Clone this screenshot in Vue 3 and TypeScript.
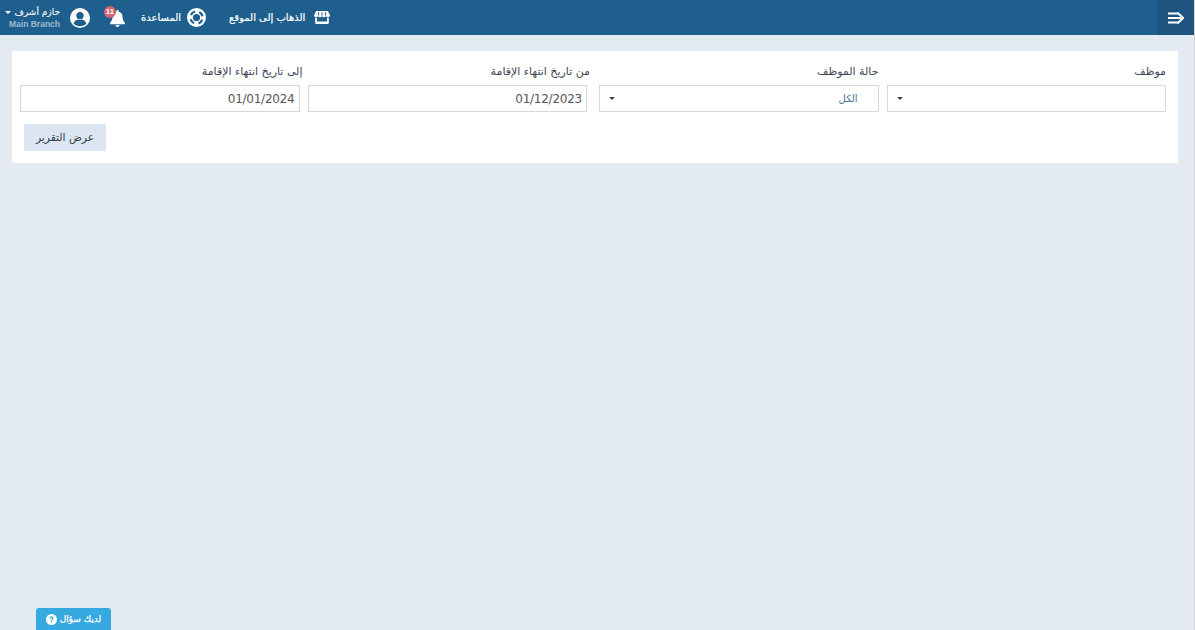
<script setup lang="ts">
const fieldsA = [
  { label: 'موظف', kind: 'select', value: '', labelClass: 'flush' },
  { label: 'حالة الموظف', kind: 'select', value: 'الكل', labelClass: 'flush' },
]
const fieldsB = [
  { label: 'من تاريخ انتهاء الإقامة', kind: 'date', value: '01/12/2023', labelClass: 'over' },
  { label: 'إلى تاريخ انتهاء الإقامة', kind: 'date', value: '01/01/2024', labelClass: 'over' },
]
const groups = [fieldsA, fieldsB]
</script>

<template>
  <div class="page">
    <header class="topbar">
      <div class="tools">
        <div class="user">
          <div class="user-row">
            <span class="caret white"></span>
            <span class="user-name">حازم أشرف</span>
          </div>
          <span class="branch">Main Branch</span>
        </div>
        <svg class="i-user" viewBox="0 0 20 20" width="20" height="20">
          <circle cx="10" cy="10" r="10" fill="#fff" />
          <circle cx="10" cy="7.600" r="3.700" fill="#1f5f8e" />
          <path d="M3.600 15.400c.9-2.500 3-3.800 4.400-3.800.7.300 1.300.4 2 .4s1.300-.1 2-.4c1.400 0 3.500 1.300 4.400 3.800C15 17.100 12.600 18.200 10 18.200s-5-1.100-6.400-2.800z" fill="#1f5f8e" />
        </svg>
        <div class="bell">
          <svg viewBox="0 0 15 17" width="15" height="17">
            <path d="M7.500 0c-.7 0-1.100.5-1.100 1.100v.7C4 2.300 2.500 4.200 2.500 6.600c0 3.700-1.300 4.900-2.100 5.800-.3.300-.4.500-.4.800 0 .6.400 1.100 1.100 1.100h12.800c.7 0 1.100-.5 1.100-1.100 0-.3-.1-.5-.4-.8-.8-.9-2.100-2.100-2.100-5.800 0-2.400-1.500-4.300-3.900-4.800v-.7C8.600.5 8.200 0 7.500 0zM5.500 15c0 1.100.9 2 2 2s2-.9 2-2z" fill="#fff" />
          </svg>
          <span class="badge">11</span>
        </div>
        <a class="tool help">
          <span class="tool-text">المساعدة</span>
          <svg viewBox="0 0 20 20" width="19" height="19">
            <circle cx="10" cy="10" r="10" fill="#fff" />
            <circle cx="10" cy="10" r="6.500" fill="none" stroke="#1f5f8e" stroke-width="2.400" stroke-dasharray="5.600 4.610" transform="rotate(20 10 10)" />
            <circle cx="10" cy="10" r="3.800" fill="#1f5f8e" />
          </svg>
        </a>
        <a class="tool site">
          <span class="tool-text">الذهاب إلى الموقع</span>
          <svg viewBox="0 0 16 13" width="16" height="13">
            <path d="M2.200 0h11.600L16 4.200c0 1.200-.9 2-2 2-.8 0-1.500-.4-2-1-.5.600-1.200 1-2 1s-1.500-.4-2-1c-.5.600-1.200 1-2 1s-1.500-.4-2-1c-.5.600-1.200 1-2 1-1.100 0-2-.8-2-2z" fill="#fff" />
            <path d="M1.200 6.800h1.800v3.800h10V6.800h1.800V12a1 1 0 0 1-1 1H2.200a1 1 0 0 1-1-1z" fill="#fff" />
            <path d="M4.600 1.200v3.300M8 1.200v3.300M11.400 1.200v3.300" stroke="#1f5f8e" stroke-width="1" />
          </svg>
        </a>
      </div>
      <button class="toggle" type="button" aria-label="menu">
        <svg viewBox="0 0 16 12" width="16" height="12">
          <path d="M0 1.500h10M0 6h13M0 10.500h10" stroke="#fff" stroke-width="2.200" fill="none" />
          <path d="M9.500 .6L15 6l-5.500 5.400" stroke="#fff" stroke-width="2" fill="none" />
        </svg>
      </button>
    </header>

    <main class="content">
      <section class="card" dir="rtl">
        <div class="rows">
          <div v-for="(group, g) in groups" :key="g" class="group">
            <div v-for="field in group" :key="field.label" class="field">
              <label class="label" :class="field.labelClass">{{ field.label }}</label>
              <div v-if="field.kind === 'select'" class="control select">
                <span class="select-value">{{ field.value }}</span>
                <span class="caret dark"></span>
              </div>
              <div v-else class="control date">{{ field.value }}</div>
            </div>
          </div>
        </div>
        <button class="report" type="button">عرض التقرير</button>
      </section>
    </main>

    <button class="ask" type="button">
      <svg viewBox="0 0 12 12" width="11" height="11">
        <circle cx="6" cy="6" r="6" fill="#fff" />
        <path d="M3.800 4.600c0-1.300 1-2.100 2.200-2.100s2.200.8 2.200 2c0 1.600-1.500 1.500-1.500 2.500H5.200c0-1.800 1.500-1.700 1.500-2.500 0-.4-.3-.7-.7-.7s-.8.300-.8.800zM5.200 7.900h1.500v1.500H5.200z" fill="#36a9e1" />
      </svg>
      <span>لديك سؤال</span>
    </button>
  </div>
</template>

<style>
html, body { margin: 0; background: #e4eaf2; }
</style>

<style scoped>
.page {
  height: 630px;
  width: 1194px;
  overflow: hidden;
  background: #e4eaf2;
  font-family: "DejaVu Sans", sans-serif;
  color: #3c4654;
  box-shadow: 1px 0 0 #d3d5d8;
}
.topbar {
  height: 35px;
  background: #1f5f8e;
  display: flex;
  justify-content: space-between;
}
.tools {
  display: flex;
  align-items: center;
  color: #fff;
}
.user {
  display: flex;
  flex-direction: column;
  align-items: flex-end;
  width: 60px;
  padding-top: 1px;
}
.user-row {
  display: flex;
  align-items: center;
  gap: 4px;
  height: 13px;
}
.user-name {
  font-size: 9px;
  line-height: 13px;
  direction: rtl;
  white-space: nowrap;
  color: #f0f4f7;
  -webkit-text-stroke: 0.15px #f0f4f7;
}
.branch {
  font-family: "Liberation Sans", sans-serif;
  font-size: 8.500px;
  font-weight: bold;
  line-height: 11px;
  color: #9dbacf;
  white-space: nowrap;
}
.caret {
  width: 0;
  height: 0;
  border-left: 3px solid transparent;
  border-right: 3px solid transparent;
  border-top: 3px solid #fff;
}
.caret.dark { border-top-color: #3c4654; }
.i-user { margin-left: 10px; }
.bell {
  position: relative;
  margin-left: 20px;
  margin-top: 1px;
  width: 15px;
  height: 17px;
}
.badge {
  position: absolute;
  left: -6px;
  top: -4px;
  width: 12px;
  height: 12px;
  border-radius: 50%;
  background: #d6646f;
  color: #fff;
  font-family: "Liberation Sans", sans-serif;
  font-size: 8px;
  line-height: 12px;
  font-weight: bold;
  text-align: center;
}
.tool {
  display: flex;
  align-items: center;
  gap: 6px;
}
.tool-text {
  font-size: 10px;
  direction: rtl;
  white-space: nowrap;
  -webkit-text-stroke: 0.2px #fff;
}
.help { margin-left: 16px; }
.site { margin-left: 23px; gap: 9px; }
.toggle {
  width: 36px;
  height: 35px;
  padding: 0;
  border: 0;
  background: #1d5580;
  display: flex;
  align-items: center;
  justify-content: center;
}
.content {
  padding: 16px 16px 0 12px;
}
.card {
  background: #fff;
  height: 112px;
  box-sizing: border-box;
  padding: 12px 12px 0 8px;
}
.rows {
  display: grid;
  grid-template-columns: 1fr 1fr;
  gap: 12px;
}
.group {
  display: grid;
  grid-template-columns: 1fr 1fr;
  gap: 8px;
}
.field {
  display: flex;
  flex-direction: column;
  min-width: 0;
}
.label {
  font-size: 11px;
  line-height: 18px;
  height: 22px;
  color: #3c4654;
}
.label.over { margin-right: -3px; }
.control {
  height: 27px;
  box-sizing: border-box;
  border: 1px solid #cfdbdc;
  background: #fff;
  display: flex;
  align-items: center;
}
.select {
  justify-content: space-between;
  padding: 0 20px 0 9px;
}
.select-value {
  font-size: 10px;
  color: #3f7396;
}
.date {
  font-size: 12px;
  color: #555;
  padding: 0 4px;
  direction: ltr;
  justify-content: flex-end;
  letter-spacing: -0.02em;
}
.report {
  display: block;
  margin-top: 12px;
  margin-right: auto;
  margin-left: 4px;
  width: 82px;
  height: 27px;
  border: 0;
  padding: 0;
  background: #dbe6f2;
  color: #333c4a;
  font-family: "DejaVu Sans", sans-serif;
  font-size: 10.700px;
}
.ask {
  position: fixed;
  left: 36px;
  bottom: 0;
  width: 75px;
  height: 22px;
  border: 0;
  padding: 0;
  border-radius: 3px 3px 0 0;
  background: #36a9e1;
  color: #fff;
  font-family: "DejaVu Sans", sans-serif;
  font-size: 9px;
  -webkit-text-stroke: 0.25px #fff;
  display: flex;
  align-items: center;
  justify-content: center;
  gap: 3px;
}
.ask span { direction: rtl; }
</style>
